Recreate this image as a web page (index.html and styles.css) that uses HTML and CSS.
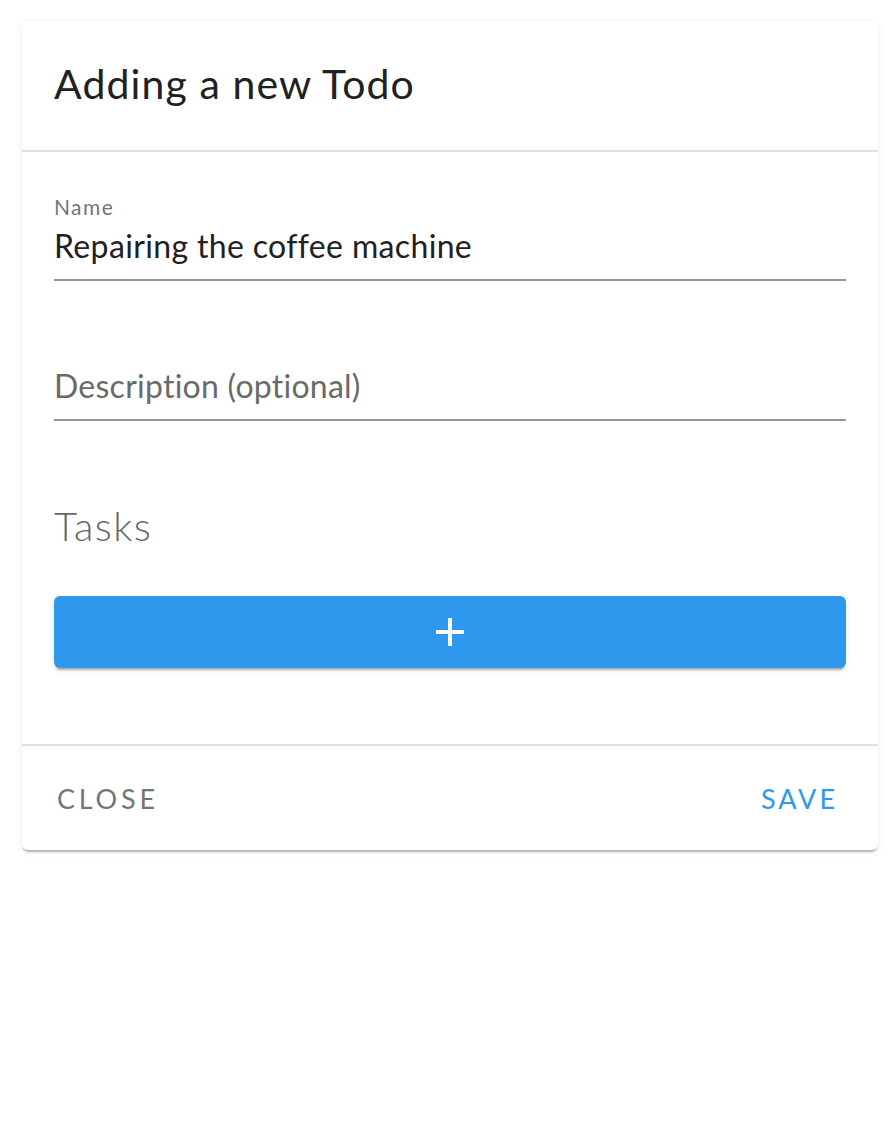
FILE: index.html
```html
<!DOCTYPE html>
<html lang="en">
<head>
<meta charset="utf-8">
<title>Adding a new Todo</title>
<link rel="stylesheet" href="styles.css">
</head>
<body>
<div class="page">
  <div class="card">
    <div class="card-header">
      <h1 class="title">Adding a new Todo</h1>
    </div>
    <div class="card-body">
      <div class="field">
        <div class="label">Name</div>
        <div class="input">Repairing the coffee machine</div>
      </div>
      <div class="field field-empty">
        <div class="label"></div>
        <div class="input placeholder">Description (optional)</div>
      </div>
      <div class="tasks-title">Tasks</div>
      <button class="add-btn" type="button" aria-label="Add task">
        <svg width="28" height="28" viewBox="0 0 28 28" aria-hidden="true"><path d="M14 0V28M0 14H28" stroke="#fff" stroke-width="4" fill="none"/></svg>
      </button>
    </div>
    <div class="card-actions">
      <button class="text-btn close" type="button">Close</button>
      <button class="text-btn save" type="button">Save</button>
    </div>
  </div>
</div>
</body>
</html>
```

FILE: styles.css
```css
html, body {
  margin: 0;
  padding: 0;
  background: #ffffff;
}

body {
  font-family: Lato, "Noto Sans", sans-serif;
  color: #212121;
}

.page {
  padding: 22px 18px 22px 22px;
}

.card {
  width: 856px;
  background: #fff;
  border-radius: 6px;
  box-shadow: 0 3px 2px -1px rgba(0, 0, 0, 0.28), 0 1px 10px rgba(0, 0, 0, 0.07);
}

.card-header {
  height: 128px;
  display: flex;
  align-items: center;
  padding: 0 32px;
  border-bottom: 2px solid #e0e0e0;
}

.title {
  margin: 0;
  padding-bottom: 4px;
  font-size: 41px;
  font-weight: 400;
  line-height: 48px;
  color: #212121;
  letter-spacing: 1.1px;
}

.card-body {
  padding: 43px 32px 76px;
}

.field {
  border-bottom: 2px solid #949494;
  padding-bottom: 13px;
}

.field + .field {
  margin-top: 54px;
}

.label {
  height: 24px;
  font-size: 21px;
  line-height: 24px;
  letter-spacing: 1.4px;
  color: #757575;
  margin-bottom: 7px;
}

.input {
  font-size: 32px;
  line-height: 40px;
  height: 40px;
  letter-spacing: 0.35px;
  color: #212121;
}

.placeholder {
  color: #6a6a6a;
  letter-spacing: 0.25px;
}

.tasks-title {
  margin-top: 81px;
  font-size: 40px;
  line-height: 48px;
  font-weight: 300;
  letter-spacing: 1.5px;
  color: #666666;
}

.add-btn {
  margin-top: 46px;
  width: 100%;
  height: 72px;
  border: 0;
  border-radius: 6px;
  background: #2d98ee;
  display: flex;
  align-items: center;
  justify-content: center;
  padding: 0;
  box-shadow: 0 4px 2px -2px rgba(0, 0, 0, 0.28), 0 2px 6px rgba(0, 0, 0, 0.1);
  cursor: pointer;
}

.card-actions {
  height: 104px;
  border-top: 2px solid #e0e0e0;
  display: flex;
  align-items: center;
  justify-content: space-between;
  padding: 0 40px 0 35px;
}

.text-btn {
  background: none;
  border: 0;
  padding: 0;
  font-family: Lato, "Noto Sans", sans-serif;
  font-size: 27px;
  letter-spacing: 3.8px;
  text-transform: uppercase;
  cursor: pointer;
}

.close {
  color: #757575;
}

.save {
  color: #2d98ee;
  letter-spacing: 3px;
}
```
